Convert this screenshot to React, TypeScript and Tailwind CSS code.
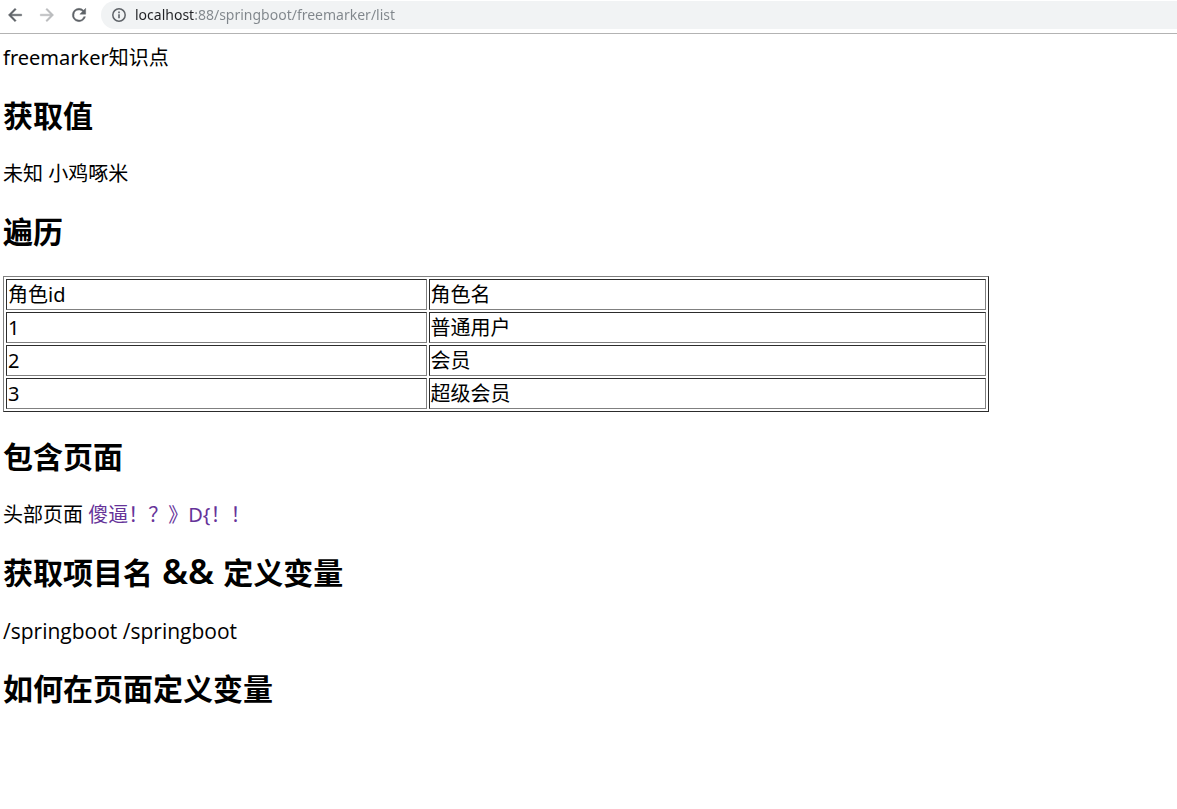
import type { ReactNode } from "react";

const roles = [
  { id: 1, name: "普通用户" },
  { id: 2, name: "会员" },
  { id: 3, name: "超级会员" },
];

function NavButton({ label, disabled, children }: { label: string; disabled?: boolean; children: ReactNode }) {
  return (
    <button type="button" aria-label={label} disabled={disabled} className="size-5 text-[#5f6368] disabled:text-[#babcbe]">
      <svg viewBox="0 0 24 24" className="size-5" fill="currentColor" aria-hidden="true">
        {children}
      </svg>
    </button>
  );
}

function Toolbar() {
  return (
    <header className="flex h-[34px] items-start border-b border-[#b3b3b3] pt-px pl-[5px]">
      <nav className="flex h-7 items-center gap-3">
        <NavButton label="后退">
          <path d="M20 11H7.83l5.59-5.59L12 4l-8 8 8 8 1.41-1.41L7.83 13H20v-2z" stroke="currentColor" strokeWidth="0.5" />
        </NavButton>
        <NavButton label="前进" disabled>
          <path d="M12 4l-1.41 1.41L16.17 11H4v2h12.17l-5.58 5.59L12 20l8-8z" stroke="currentColor" strokeWidth="0.5" />
        </NavButton>
        <NavButton label="重新加载">
          <path d="M17.65 6.35A7.96 7.96 0 0 0 12 4a8 8 0 1 0 7.73 10h-2.08A6 6 0 1 1 12 6c1.66 0 3.14.69 4.22 1.78L13 11h7V4l-2.35 2.35z" stroke="currentColor" strokeWidth="0.5" />
        </NavButton>
      </nav>
      <div className="ml-3 flex h-7 flex-1 items-center gap-2 rounded-l-full bg-[#f1f3f4] pl-[10px]">
        <svg viewBox="0 0 16 16" className="size-4 shrink-0" fill="none" stroke="#5f6368" aria-hidden="true">
          <circle cx="8" cy="8" r="6.2" strokeWidth="1.5" />
          <path d="M8 7.2v4" strokeWidth="1.6" />
          <path d="M8 4.6v1.6" strokeWidth="1.6" />
        </svg>
        <input
          type="text"
          aria-label="地址"
          defaultValue="localhost:88/springboot/freemarker/list"
          className="h-6 min-w-0 flex-1 bg-linear-to-r from-[#202124] from-[60px] to-[#80868b] to-[60px] bg-clip-text pb-[2px] text-sm text-transparent outline-none"
        />
      </div>
    </header>
  );
}

function Heading({ children }: { children: ReactNode }) {
  return <h2 className="my-6 text-[30px] leading-10 font-bold">{children}</h2>;
}

const cell = "border border-t-[#2c2c2c] border-r-[#808080] border-b-[#808080] border-l-[#2c2c2c] p-px text-left font-normal leading-[27px]";

export default function App() {
  return (
    <div className="min-h-screen bg-white font-['Noto_Sans','Noto_Sans_CJK_SC',sans-serif] text-black">
      <Toolbar />
      <main className="pt-[10px] pl-[3px] text-xl leading-7">
        <p>freemarker知识点</p>
        <Heading>获取值</Heading>
        <p>未知 小鸡啄米</p>
        <Heading>遍历</Heading>
        <table className="mb-[25px] w-[84%] table-fixed border-separate border-spacing-[2px] border border-t-[#808080] border-r-[#2c2c2c] border-b-[#2c2c2c] border-l-[#808080]">
          <thead>
            <tr>
              <th scope="col" className={`${cell} w-[43%]`}>角色id</th>
              <th scope="col" className={cell}>角色名</th>
            </tr>
          </thead>
          <tbody>
            {roles.map((role) => (
              <tr key={role.id}>
                <td className={cell}>{role.id}</td>
                <td className={cell}>{role.name}</td>
              </tr>
            ))}
          </tbody>
        </table>
        <Heading>包含页面</Heading>
        <p>
          头部页面 <a href="#top" className="text-[#663399]">傻逼！？》D{"{"}！！</a>
        </p>
        <Heading>
          获取项目名<span className="text-[35px] leading-none font-semibold"> &amp;&amp; </span>定义变量
        </Heading>
        <p className="font-['Open_Sans',sans-serif] text-[21px]">/springboot /springboot</p>
        <Heading>如何在页面定义变量</Heading>
      </main>
    </div>
  );
}
